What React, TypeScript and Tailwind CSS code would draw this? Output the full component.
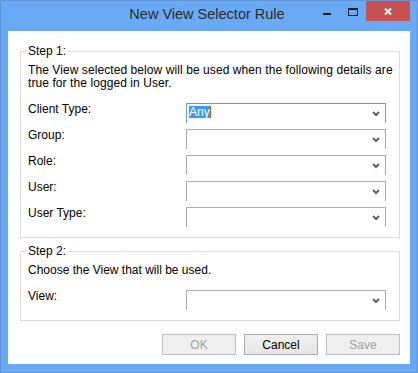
import React from 'react';

const rows = ['Client Type:', 'Group:', 'Role:', 'User:', 'User Type:'];

function Chevron() {
  return (
    <svg width="8" height="6" viewBox="0 0 8 6" className="mr-[5px] shrink-0">
      <polyline
        points="1,1 4,4 7,1"
        fill="none"
        stroke="#606060"
        strokeWidth="2"
      />
    </svg>
  );
}

function Combo({ value, focused }: { value?: string; focused?: boolean }) {
  return (
    <div
      className={`flex h-[20px] w-[200px] shrink-0 items-center justify-between border-x border-t bg-white pl-[2px] ${
        focused ? 'border-[#569de5]' : 'border-[#acacac]'
      }`}
    >
      {value ? (
        <div className="flex self-start pt-[2px]">
          <span className="bg-[#3399ff] text-[12px] leading-[12px] text-white">
            {value}
          </span>
          <span className="h-[12px] w-[1px] bg-[#c86400]" />
        </div>
      ) : (
        <span />
      )}
      <Chevron />
    </div>
  );
}

function Row({ label, value, focused }: { label: string; value?: string; focused?: boolean }) {
  return (
    <div className="flex items-start">
      <div className="w-[158px] text-[12px] leading-[13px]">{label}</div>
      <Combo value={value} focused={focused} />
    </div>
  );
}

function Button({ label, disabled }: { label: string; disabled?: boolean }) {
  return (
    <button
      className={`h-[21px] w-[74px] border text-[12px] ${
        disabled
          ? 'border-[#bfbfbf] bg-[#efefef] text-[#a0a0a0]'
          : 'border-[#acacac] bg-gradient-to-b from-[#f0f0f0] to-[#e5e5e5] text-black'
      }`}
    >
      {label}
    </button>
  );
}

export default function App() {
  return (
    <div
      className="flex h-[373px] w-[418px] flex-col border border-[#5f95d6] bg-[#6aa9f4] text-black"
      style={{ fontFamily: '"Liberation Sans", Arial, sans-serif' }}
    >
      {/* title bar */}
      <div className="flex h-[30px] shrink-0 items-start">
        <div className="w-[99px] shrink-0" />
        <div className="flex h-[28px] flex-1 items-center justify-center text-[14.5px] text-[#2b2b2b]">
          New View Selector Rule
        </div>
        <div className="mr-[7px] flex shrink-0">
          <div className="flex h-[20px] w-[26px] items-center justify-center">
            <div className="mt-[5px] h-[2px] w-[8px] bg-[#222]" />
          </div>
          <div className="flex h-[20px] w-[26px] items-center justify-center">
            <div className="mt-[2px] h-[8px] w-[10px] border border-t-2 border-[#222]" />
          </div>
          <div className="flex h-[20px] w-[44px] items-center justify-center bg-[#c75050]">
            <svg width="8" height="7" viewBox="0 0 8 7">
              <path d="M1 0.5 L7 6.5 M7 0.5 L1 6.5" stroke="#fff" strokeWidth="2" />
            </svg>
          </div>
        </div>
      </div>

      {/* client area */}
      <div className="mx-[7px] flex h-[333px] flex-col bg-white pl-[12px] pr-[10px] pt-[13px]">
        <fieldset className="min-w-0 border border-[#dcdcdc] pb-[10px] pl-[7px] pr-[12px]">
          <legend className="-ml-[2px] px-[2px] text-[12px] leading-[14px]">Step 1:</legend>
          <div className="whitespace-nowrap pt-[6px] text-[12px] leading-[13px] tracking-[0.08px]">
            The View selected below will be used when the following details are
            <br />
            true for the logged in User.
          </div>
          <div className="mt-[13px] flex flex-col gap-[6px]">
            {rows.map((label, i) => (
              <Row key={label} label={label} value={i === 0 ? 'Any' : undefined} focused={i === 0} />
            ))}
          </div>
        </fieldset>

        <fieldset className="mt-[6px] min-w-0 border border-[#dcdcdc] pb-[10px] pl-[7px] pr-[12px]">
          <legend className="-ml-[2px] px-[2px] text-[12px] leading-[14px]">Step 2:</legend>
          <div className="pt-[6px] text-[12px] leading-[13px]">Choose the View that will be used.</div>
          <div className="mt-[13px]">
            <Row label="View:" />
          </div>
        </fieldset>

        <div className="mt-[13px] flex justify-end gap-[8px]">
          <Button label="OK" disabled />
          <Button label="Cancel" />
          <Button label="Save" disabled />
        </div>
      </div>
    </div>
  );
}
